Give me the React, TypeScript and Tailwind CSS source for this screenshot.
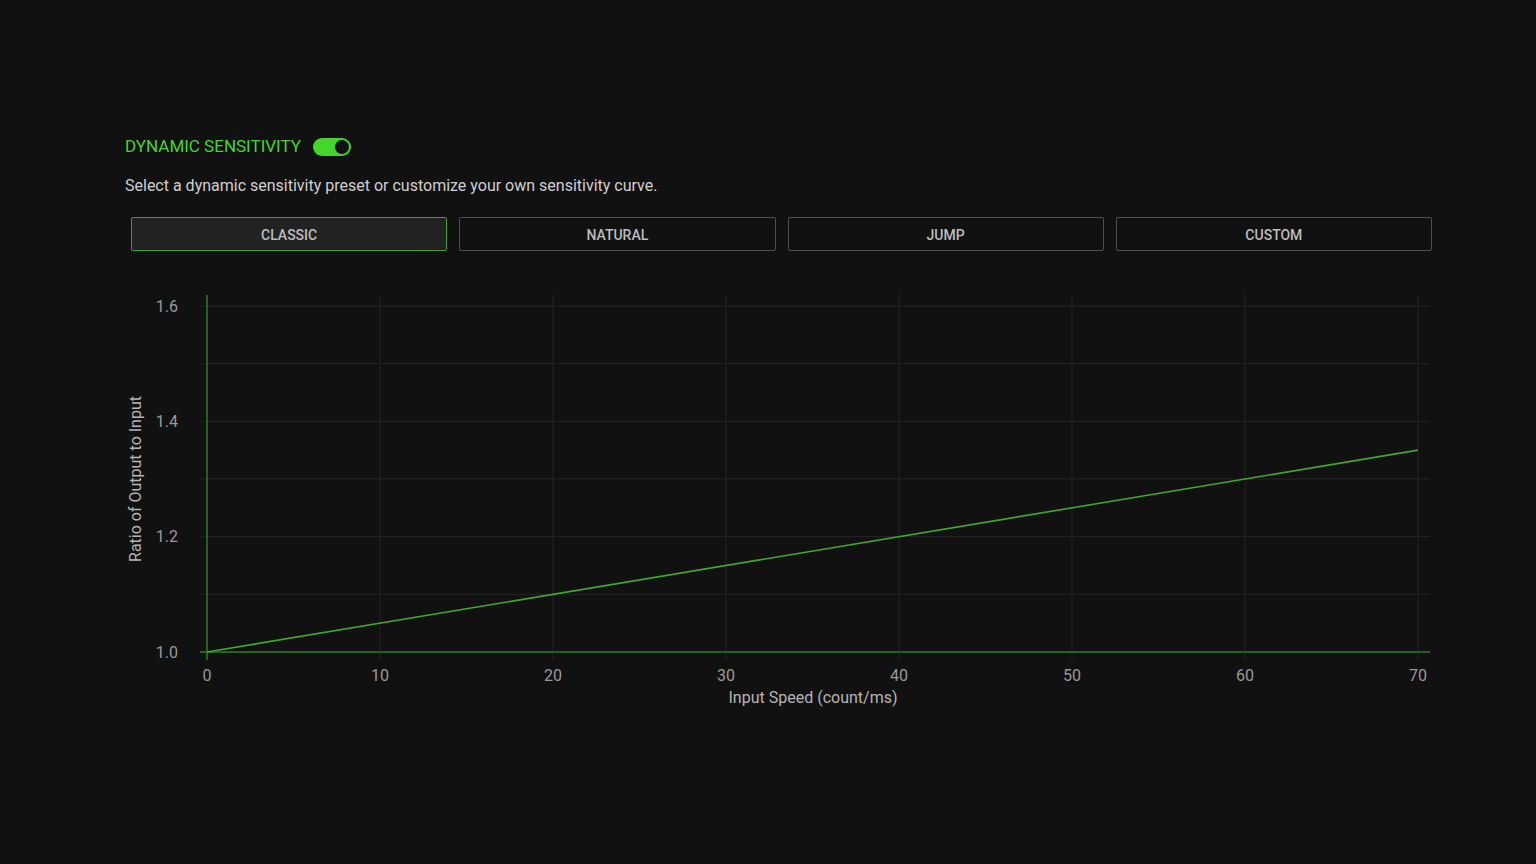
import React from 'react';

const presets = ['CLASSIC', 'NATURAL', 'JUMP', 'CUSTOM'];

const xTicks = [0, 10, 20, 30, 40, 50, 60, 70];
const yTicks = [1.0, 1.1, 1.2, 1.3, 1.4, 1.5, 1.6];

// chart geometry, in svg coordinates
const X0 = 87;
const XSTEP = 173;
const Y0 = 362;
const YSTEP = 57.67;

const xPos = (v: number) => X0 + (v / 10) * XSTEP;
const yPos = (v: number) => Y0 - ((v - 1) / 0.1) * YSTEP;

const Toggle: React.FC<{ on: boolean }> = ({ on }) => (
  <div className="relative w-[38px] h-[18px] rounded-full bg-[#44d62c]">
    <div
      className={
        on
          ? 'absolute right-[1px] top-[1px] w-[16px] h-[16px] rounded-full bg-[#111111] border border-[#44d62c]'
          : 'absolute left-[1px] top-[1px] w-[16px] h-[16px] rounded-full bg-[#111111]'
      }
    />
  </div>
);

const Chart: React.FC = () => {
  return (
    <svg width={1320} height={420} className="block" style={{ fontFamily: 'Roboto, sans-serif' }}>
      {/* grid */}
      {yTicks.map((t) => (
        <line key={'h' + t} x1={80} x2={1310} y1={yPos(t)} y2={yPos(t)} stroke="#252525" strokeWidth={1} />
      ))}
      {xTicks.map((t) => (
        <line key={'v' + t} x1={xPos(t)} x2={xPos(t)} y1={5} y2={370} stroke="#252525" strokeWidth={1} />
      ))}

      {/* axes */}
      <line x1={X0} x2={X0} y1={5} y2={370} stroke="#2d7a22" strokeWidth={1.5} />
      <line x1={80} x2={1310} y1={Y0} y2={Y0} stroke="#2d7a22" strokeWidth={1.5} />

      {/* curve */}
      <line x1={xPos(0)} y1={yPos(1.0)} x2={xPos(70)} y2={yPos(1.35)} stroke="#3fa82b" strokeWidth={1.6} />

      {/* y labels */}
      {[1.0, 1.2, 1.4, 1.6].map((t) => (
        <text key={'yl' + t} x={58} y={yPos(t)} dy="0.35em" textAnchor="end" fontSize={16} fill="#9a9a9a">
          {t.toFixed(1)}
        </text>
      ))}

      {/* x labels */}
      {xTicks.map((t) => (
        <text key={'xl' + t} x={xPos(t)} y={385} dy="0.35em" textAnchor="middle" fontSize={16} fill="#9a9a9a">
          {t}
        </text>
      ))}

      {/* axis titles */}
      <text x={693} y={407} dy="0.35em" textAnchor="middle" fontSize={16} fill="#b5b5b5">
        Input Speed (count/ms)
      </text>
      <text
        x={15}
        y={189}
        dy="0.35em"
        textAnchor="middle"
        fontSize={16}
        fill="#b5b5b5"
        transform="rotate(-90 15 189)"
      >
        Ratio of Output to Input
      </text>
    </svg>
  );
};

export default function App() {
  const active = 'CLASSIC';

  return (
    <div className="w-full h-[864px] bg-[#111111] overflow-hidden font-['Roboto',sans-serif]">
      <div className="pt-[135px] pl-[125px] pr-[104px]">
        {/* Header */}
        <div className="flex items-center h-[24px] gap-[12px]">
          <span className="text-[17px] text-[#44d62c]">DYNAMIC SENSITIVITY</span>
          <Toggle on />
        </div>

        <p className="mt-[17px] text-[16px] leading-[20px] text-[#cfcfcf]">
          Select a dynamic sensitivity preset or customize your own sensitivity curve.
        </p>

        {/* Presets */}
        <div className="mt-[21px] ml-[6px] grid grid-cols-4 gap-[12px]">
          {presets.map((p) => (
            <button
              key={p}
              className={
                p === active
                  ? 'h-[34px] pt-[2px] rounded-[2px] border border-[#3f9e2c] bg-[#222222] text-[14px] font-medium text-[#bdbdbd]'
                  : 'h-[34px] pt-[2px] rounded-[2px] border border-[#4f4f4f] bg-[#111111] text-[14px] font-medium text-[#bdbdbd]'
              }
            >
              {p}
            </button>
          ))}
        </div>

        {/* Chart */}
        <div className="mt-[39px] -ml-[5px]">
          <Chart />
        </div>
      </div>
    </div>
  );
}
